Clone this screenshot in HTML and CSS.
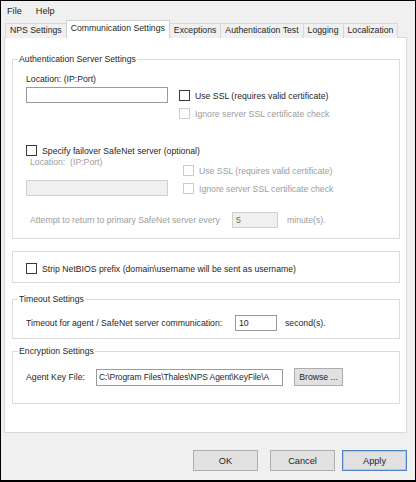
FILE: index.html
```html
<!DOCTYPE html>
<html>
<head>
<meta charset="utf-8">
<title>Communication Settings</title>
<link rel="stylesheet" href="styles.css">
</head>
<body>
<div class="window">
  <div class="menubar">
    <span class="menu">File</span>
    <span class="menu">Help</span>
  </div>
  <div class="tabs">
    <div class="tab">NPS Settings</div>
    <div class="tab active">Communication Settings</div>
    <div class="tab">Exceptions</div>
    <div class="tab">Authentication Test</div>
    <div class="tab">Logging</div>
    <div class="tab">Localization</div>
  </div>
  <div class="panel">
    <div class="group auth">
      <span class="legend">Authentication Server Settings</span>
      <div class="lbl">Location: (IP:Port)</div>
      <div class="row r-loc">
        <div class="input loc"></div>
        <div class="checks c1">
          <div class="check"><span class="box"></span><span>Use SSL (requires valid certificate)</span></div>
          <div class="check dis"><span class="box"></span><span>Ignore server SSL certificate check</span></div>
        </div>
      </div>
      <div class="check failover"><span class="box"></span><span>Specify failover SafeNet server (optional)</span></div>
      <div class="row r-fail">
        <div class="col">
          <div class="lbl dis ind">Location:&nbsp; (IP:Port)</div>
          <div class="input loc disabled"></div>
        </div>
        <div class="checks c2">
          <div class="check dis"><span class="box"></span><span>Use SSL (requires valid certificate)</span></div>
          <div class="check dis"><span class="box"></span><span>Ignore server SSL certificate check</span></div>
        </div>
      </div>
      <div class="row r-attempt">
        <span class="lbl dis ind w-attempt">Attempt to return to primary SafeNet server every</span>
        <div class="input num disabled">5</div>
        <span class="dis unit-min">minute(s).</span>
      </div>
    </div>

    <div class="group strip">
      <div class="check"><span class="box"></span><span>Strip NetBIOS prefix (domain\username will be sent as username)</span></div>
    </div>

    <div class="group timeout">
      <span class="legend">Timeout Settings</span>
      <div class="row r-timeout">
        <span class="lbl w-timeout">Timeout for agent / SafeNet server communication:</span>
        <div class="input sec">10</div>
        <span class="unit-sec">second(s).</span>
      </div>
    </div>

    <div class="group enc">
      <span class="legend">Encryption Settings</span>
      <div class="row r-enc">
        <span class="lbl w-key">Agent Key File:</span>
        <div class="input keyfile"><span class="keytext">C:\Program Files\Thales\NPS Agent\KeyFile\A</span></div>
        <div class="btn browse">Browse ...</div>
      </div>
    </div>
  </div>
  <div class="buttons">
    <div class="btn dlg ok">OK</div>
    <div class="btn dlg cancel">Cancel</div>
    <div class="btn dlg apply">Apply</div>
  </div>
</div>
</body>
</html>
```

FILE: styles.css
```css
* { box-sizing: border-box; }

html, body {
  margin: 0;
  padding: 0;
  background: #ffffff;
}

body {
  font-family: "Liberation Sans", Arial, sans-serif;
  font-size: 8.7px;
  color: #1f1f1f;
}

.window {
  width: 416px;
  height: 482px;
  background: #f0f0f0;
  border: 1px solid #000;
  border-bottom-width: 2px;
  overflow: hidden;
}

/* menu bar */
.menubar {
  height: 20px;
  display: flex;
  align-items: center;
  padding-left: 6px;
  font-size: 9.2px;
}
.menu { margin-right: 14px; }

/* tabs */
.tabs {
  display: flex;
  align-items: flex-end;
  height: 17px;
  margin-left: 4px;
  margin-bottom: -1px;
  position: relative;
  z-index: 1;
}
.tab {
  height: 15px;
  line-height: 13px;
  padding: 0 4px;
  border: 1px solid #d9d9d9;
  border-bottom: none;
  margin-right: -1px;
  background: #f0f0f0;
  white-space: nowrap;
}
.tab.active {
  height: 18px;
  line-height: 15px;
  background: #ffffff;
  border-color: #d0d0d0;
  position: relative;
  z-index: 2;
}

/* panel */
.panel {
  margin-left: 3px;
  width: 403px;
  background: #ffffff;
  border: 1px solid #d9d9d9;
  padding: 21px 6px 28px 7px;
  display: flex;
  flex-direction: column;
}

.group {
  position: relative;
  border: 1px solid #dcdcdc;
  padding-left: 13px;
}
.legend {
  position: absolute;
  top: -7px;
  left: 5px;
  padding: 0 1px;
  line-height: 12px;
  background: #ffffff;
  white-space: nowrap;
}

.lbl { line-height: 12px; white-space: nowrap; }
.dis { color: #9d9d9d; }
.ind { margin-left: 4px; }

.row { display: flex; }

.input {
  height: 16px;
  border: 1px solid #9a9a9a;
  background: #ffffff;
  line-height: 14px;
  padding-left: 3px;
  white-space: nowrap;
  overflow: hidden;
}
.input.disabled {
  background: #f0f0f0;
  border-color: #cfcfcf;
  color: #6d6d6d;
}

.checks {
  display: flex;
  flex-direction: column;
  gap: 7px;
}
.check {
  display: flex;
  align-items: center;
  height: 11px;
  white-space: nowrap;
}
.box {
  width: 11px;
  height: 11px;
  border: 1px solid #3a3a3a;
  background: #ffffff;
  margin-right: 5px;
  flex: none;
}
.check.dis .box { border-color: #cccccc; }

/* authentication group */
.auth { padding-top: 13px; padding-bottom: 10px; }
.r-loc { margin-top: 2px; }
.loc { width: 142px; }
.c1 { margin-left: 11px; padding-top: 3px; }
.failover { margin-top: 26px; }
.col { width: 142px; display: flex; flex-direction: column; }
.col .input { margin-top: 12px; }
.c2 { margin-left: 15px; padding-top: 9px; }
.r-attempt { margin-top: 16px; align-items: center; }
.w-attempt { width: 202px; }
.num { width: 46px; }
.unit-min { margin-left: 9px; }

/* strip box */
.strip { margin-top: 12px; padding-top: 11px; padding-bottom: 8px; }

/* timeout */
.timeout { margin-top: 16px; padding-top: 15px; padding-bottom: 7px; }
.r-timeout { align-items: center; }
.w-timeout { width: 209px; }
.sec { width: 42px; }
.unit-sec { margin-left: 8px; }

/* encryption */
.enc { margin-top: 12px; padding-top: 16px; padding-bottom: 17px; }
.r-enc { align-items: center; height: 18px; }
.w-key { width: 70px; }
.keyfile { width: 187px; height: 17px; line-height: 15px; padding-left: 2px; }
.keytext { font-size: 8.5px; letter-spacing: -0.1px; }

/* buttons */
.btn {
  background: #e1e1e1;
  border: 1px solid #adadad;
  display: flex;
  align-items: center;
  justify-content: center;
  white-space: nowrap;
}
.browse { margin-left: 11px; width: 49px; height: 18px; }

.buttons {
  display: flex;
  justify-content: flex-end;
  padding-right: 8px;
  margin-top: 17px;
}
.dlg { height: 21px; width: 65px; font-size: 9.2px; }
.ok { margin-right: 12px; }
.cancel { margin-right: 7px; }
.apply {
  border-color: #4f84c4;
  box-shadow: inset 0 0 0 1px #b4c9e6;
}
```
